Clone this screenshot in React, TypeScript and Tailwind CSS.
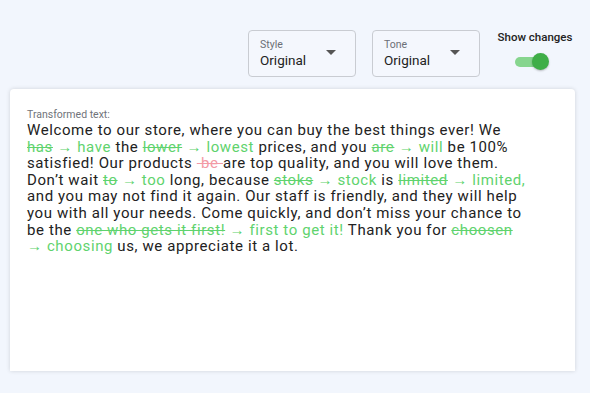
import React from "react";

function Del({ children }: { children: React.ReactNode }) {
  return <span className="text-[#5fd36e] line-through">{children}</span>;
}
function Ins({ children }: { children: React.ReactNode }) {
  return <span className="text-[#5fd36e]">{children}</span>;
}

function Select({ label, value }: { label: string; value: string }) {
  return (
    <div className="relative w-[108px] h-[47px] rounded-[4px] border border-[#c9ccd2] bg-[#f4f7fd] pl-[11px] pt-[7px]">
      <div className="text-[10.5px] leading-[13px] text-[#6b6f76]">{label}</div>
      <div className="text-[13.5px] leading-[18px] text-[#222]">{value}</div>
      <svg className="absolute right-[19px] top-[19px]" width="10" height="5" viewBox="0 0 10 5">
        <path d="M0 0 L10 0 L5 5 Z" fill="#555" />
      </svg>
    </div>
  );
}

export default function App() {
  return (
    <div
      className="w-[590px] h-[393px] bg-[#f2f6fd] overflow-hidden flex flex-col"
      style={{ fontFamily: "Roboto, 'Noto Sans', sans-serif" }}
    >
      <div className="flex items-start justify-end gap-[16px] pt-[30px] pr-[16px] h-[89px]">
        <Select label="Style" value="Original" />
        <Select label="Tone" value="Original" />
        <div className="flex flex-col items-center w-[78px]">
          <div className="text-[11.5px] leading-[14px] font-medium text-[#222]">Show changes</div>
          <div className="relative mt-[9px] w-[34px] h-[17px] mr-[6px]">
            <div className="absolute left-0 top-[3.5px] w-[30px] h-[10px] rounded-full bg-[#86d58e]" />
            <div className="absolute right-0 top-0 w-[17px] h-[17px] rounded-full bg-[#3fae48] shadow-[0_1px_2px_rgba(0,0,0,0.25)]" />
          </div>
        </div>
      </div>
      <div className="mx-[10px] w-[565px] h-[282px] bg-white rounded-t-[4px] shadow-[0_0_4px_rgba(0,0,0,0.15)] pl-[17px] pt-[20px]">
        <div className="text-[10.5px] leading-[12px] text-[#70737a]">Transformed text:</div>
        <div
          className="w-[501px] text-[15px] leading-[16.6px] text-[#222] mt-[1px]"
          style={{ fontFamily: "Roboto, sans-serif", letterSpacing: "0.6px" }}
        >
          Welcome to our store, where you can buy the best things ever! We{" "}
          <Del>has</Del> <Ins>→&nbsp;have</Ins> the <Del>lower</Del> <Ins>→&nbsp;lowest</Ins> prices, and you{" "}
          <Del>are</Del> <Ins>→&nbsp;will</Ins> be 100% satisfied! Our products{" "}
          <span className="text-[#f39aa5] line-through">&nbsp;be&nbsp;</span>are top quality, and you will love them.
          Don’t wait <Del>to</Del> <Ins>→&nbsp;too</Ins> long, because <Del>stoks</Del> <Ins>→&nbsp;stock</Ins> is{" "}
          <Del>limited</Del> <Ins>→&nbsp;limited,</Ins> and you may not find it again. Our staff is friendly, and they
          will help you with all your needs. Come quickly, and don’t miss your chance to be the{" "}
          <Del>one who gets it first!</Del> <Ins>→&nbsp;first to get it!</Ins> Thank you for <Del>choosen</Del>{" "}
          <Ins>→&nbsp;choosing</Ins> us, we appreciate it a lot.
        </div>
      </div>
    </div>
  );
}
